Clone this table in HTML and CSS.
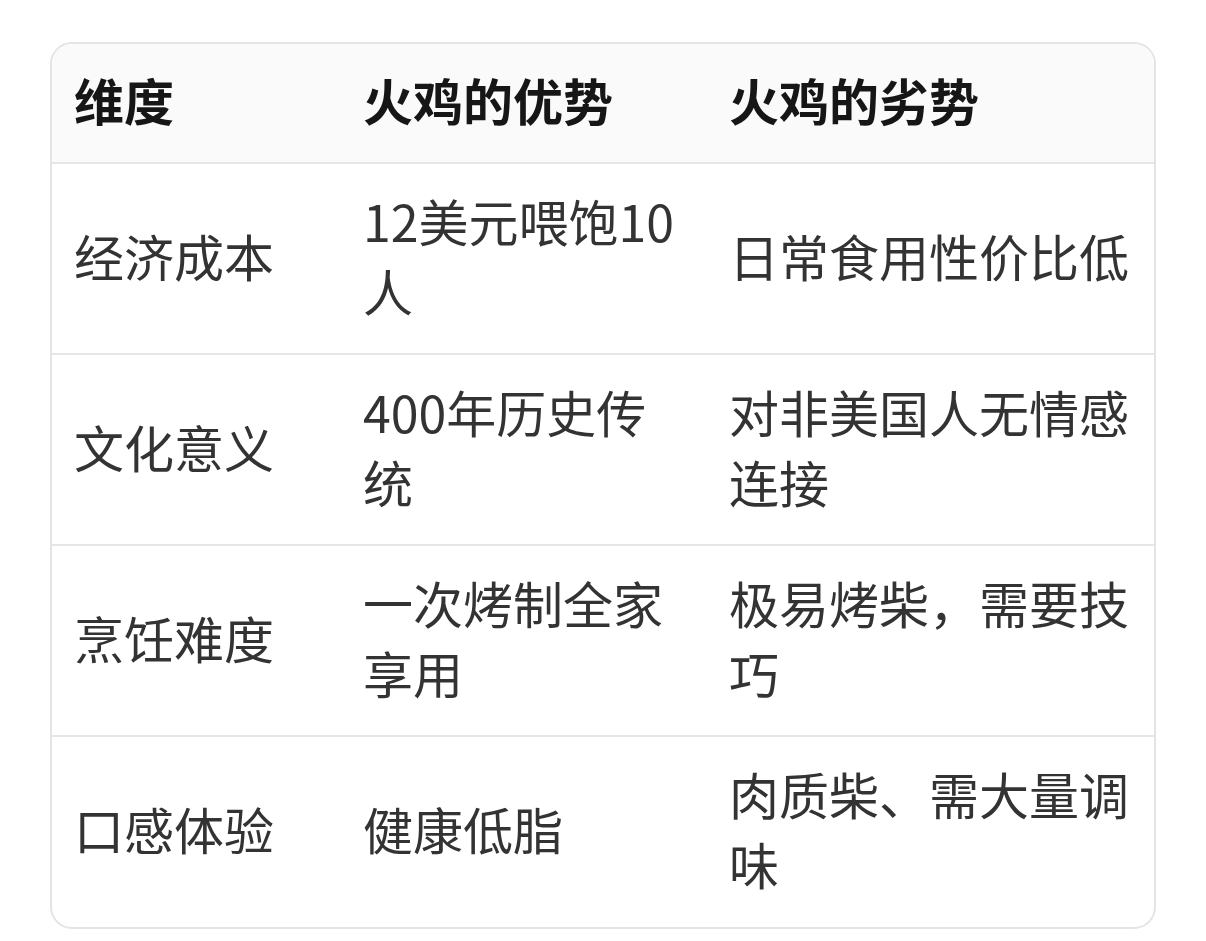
FILE: index.html
```html
<!DOCTYPE html>
<html lang="zh-CN">
<head>
<meta charset="utf-8">
<link rel="stylesheet" href="styles.css">
</head>
<body>
<div class="card">
  <table class="grid">
    <colgroup>
      <col class="c1"><col class="c2"><col class="c3">
    </colgroup>
    <thead>
      <tr><th>维度</th><th>火鸡的优势</th><th>火鸡的劣势</th></tr>
    </thead>
    <tbody>
      <tr><td>经济成本</td><td>12美元喂饱10人</td><td>日常食用性价比低</td></tr>
      <tr><td>文化意义</td><td>400年历史传统</td><td>对非美国人无情感连接</td></tr>
      <tr><td>烹饪难度</td><td>一次烤制全家享用</td><td>极易烤柴，需要技巧</td></tr>
      <tr><td>口感体验</td><td>健康低脂</td><td>肉质柴、需大量调味</td></tr>
    </tbody>
  </table>
</div>
</body>
</html>
```

FILE: styles.css
```css
html, body {
  margin: 0;
  padding: 0;
  background: #ffffff;
}
body {
  padding: 42px 0 0 50px;
  font-family: "Noto Sans CJK SC", "Noto Sans", sans-serif;
}
.card {
  width: 1102px;
  border: 2px solid #e4e4e4;
  border-radius: 22px;
  overflow: hidden;
}
.grid {
  width: 100%;
  border-collapse: collapse;
  table-layout: fixed;
}
.c1 { width: 289px; }
.c2 { width: 366px; }
.c3 { width: auto; }
th, td {
  text-align: left;
  vertical-align: middle;
  padding: 21px 20px 28px 22px;
  font-size: 50px;
  line-height: 70px;
}
th {
  font-weight: 700;
  color: #161616;
  background: #fafafa;
  border-bottom: 2px solid #e6e6e6;
  padding-top: 20px;
  padding-bottom: 28px;
}
td {
  font-weight: 400;
  color: #333333;
  border-bottom: 2px solid #e6e6e6;
}
tbody tr:last-child td {
  border-bottom: none;
  padding-bottom: 29px;
}
```
